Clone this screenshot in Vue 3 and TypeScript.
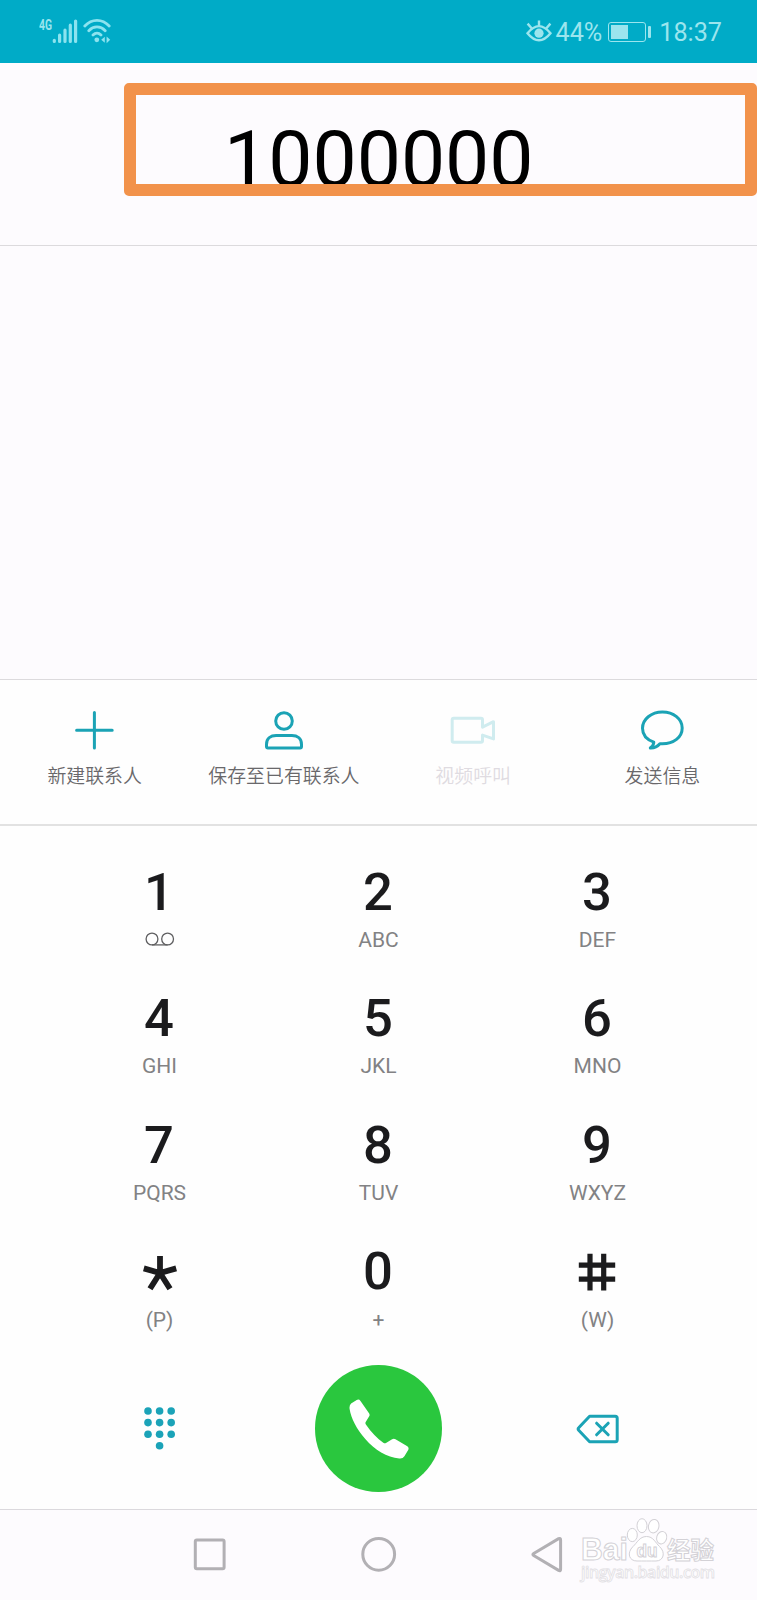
<script setup lang="ts">
interface DialKey {
  digit: string
  letters: string
  kind?: 'voicemail' | 'star' | 'hash'
}

const dialedNumber = '1000000'

const keys: DialKey[] = [
  { digit: '1', letters: '', kind: 'voicemail' },
  { digit: '2', letters: 'ABC' },
  { digit: '3', letters: 'DEF' },
  { digit: '4', letters: 'GHI' },
  { digit: '5', letters: 'JKL' },
  { digit: '6', letters: 'MNO' },
  { digit: '7', letters: 'PQRS' },
  { digit: '8', letters: 'TUV' },
  { digit: '9', letters: 'WXYZ' },
  { digit: '*', letters: '(P)', kind: 'star' },
  { digit: '0', letters: '+' },
  { digit: '#', letters: '(W)', kind: 'hash' },
]

const padDots = [
  [4, 4], [15.6, 4], [27.2, 4],
  [4, 15.6], [15.6, 15.6], [27.2, 15.6],
  [4, 27.2], [15.6, 27.2], [27.2, 27.2],
  [15.6, 38.8],
]
</script>

<template>
  <div class="phone">
    <header class="status">
      <div class="status-left">
        <span class="network">4G</span>
        <svg class="signal" width="26" height="26" viewBox="0 0 26 26">
          <path d="M2.3 22.3v1.2M7.6 17.2v6.3M13 12.2v11.3M18.3 7.2v16.3M23.6 3v20.5" />
        </svg>
        <svg class="wifi" width="28" height="26" viewBox="0 0 28 26">
          <path d="M1.8 8C8.8 .4 19.2 .4 26.2 8M5.8 12.7c4.8-5 11.6-5 16.4 0M10 17c2.4-2.4 5.6-2.4 8 0" />
          <circle cx="13.8" cy="21.8" r="2.4" />
          <path class="solid" d="M21.8 18.8v6l-3.6-3zM23.6 18.4v6.8l3.6-3.4z" />
        </svg>
      </div>
      <div class="status-right">
        <svg class="eye" width="26" height="24" viewBox="0 0 26 24">
          <path d="M1.500 13.200Q13 -1 24.500 13.200Q13 27.400 1.500 13.200ZM13 .6v5M1.600 3.600l3.800 4.400M24.400 3.600l-3.800 4.400" />
          <circle cx="13" cy="13.200" r="4.600" />
        </svg>
        <span class="percent">44%</span>
        <span class="battery"><span class="level"></span></span>
        <span class="nub"></span>
        <span class="time">18:37</span>
      </div>
    </header>

    <section class="display">
      <div class="number">{{ dialedNumber }}</div>
      <div class="highlight"></div>
    </section>

    <section class="results"></section>

    <section class="actions">
      <div class="action">
        <svg width="50" height="44" viewBox="0 0 50 44">
          <path d="M24.400 3.500v35.600M6.600 21.300h35.600" />
        </svg>
        <span>新建联系人</span>
      </div>
      <div class="action">
        <svg width="50" height="44" viewBox="0 0 50 44">
          <circle cx="25" cy="12" r="8.300" />
          <path d="M7.500 37.600v-2.200c0-6 4.400-8.800 9.600-8.800h15.800c5.200 0 9.600 2.800 9.600 8.800v2.200q0 1.400-1.400 1.400h-32.200q-1.400 0-1.400-1.400z" />
        </svg>
        <span>保存至已有联系人</span>
      </div>
      <div class="action disabled">
        <svg width="50" height="44" viewBox="0 0 50 44">
          <path d="M34.500 18.100V10.700q0-1.500-1.500-1.500H5.700q-1.500 0-1.500 1.500v21q0 1.500 1.500 1.500h27.300q1.500 0 1.500-1.500V26.100l11 3.800V12.700z" />
        </svg>
        <span>视频呼叫</span>
      </div>
      <div class="action">
        <svg width="50" height="44" viewBox="0 0 50 44">
          <path d="M16.800 33.200C9.800 30.700 5.500 25.600 5.500 19.300 5.500 10.300 14.200 3 25.400 3s19.800 7 19.800 16c0 9.400-8.600 15.800-19.800 15.800h-2.500c-2.100 2.500-5.200 4.400-9.600 4.200 2.400-2 3.500-3.900 3.500-5.800z" />
        </svg>
        <span>发送信息</span>
      </div>
    </section>

    <section class="dialer">
      <div class="keypad">
        <div v-for="key in keys" :key="key.digit" class="key" :class="key.kind">
          <svg v-if="key.kind === 'hash'" class="digit-icon" width="38" height="38" viewBox="0 0 38 38" role="img" aria-label="#">
            <path d="M12 .8v36.800M25.700 .8v36.800M.8 12.200h36.400M.8 26.200h36.400" />
          </svg>
          <svg v-else-if="key.kind === 'star'" class="digit-icon" width="36" height="36" viewBox="0 0 36 36" role="img" aria-label="*">
            <path d="M18 1v17M1.800 13.400 18 18M34.200 13.400 18 18M8 33.700 18 18M28 33.700 18 18" />
          </svg>
          <span v-else class="digit">{{ key.digit }}</span>
          <svg v-if="key.kind === 'voicemail'" class="tape" width="30" height="22" viewBox="0 0 30 22">
            <circle cx="7" cy="11" r="5.900" />
            <circle cx="22.600" cy="11" r="5.900" />
            <path d="M7 16.900h15.600" />
          </svg>
          <span v-else class="letters">{{ key.letters }}</span>
        </div>
      </div>

      <div class="controls">
        <div class="control">
          <svg class="dots" width="31.200" height="43" viewBox="0 0 31.200 43">
            <circle v-for="(dot, i) in padDots" :key="i" :cx="dot[0]" :cy="dot[1]" r="3.800" />
          </svg>
        </div>
        <div class="control">
          <div class="call">
            <svg width="60" height="60" viewBox="0 0 60 60">
              <path d="M2.100 4.600 7.700 1.100Q9.900-.2 11.500 2L20.200 14.600Q21 15.900 20.200 17.300L16.700 22.900Q16 24.100 16.900 25.400C22.500 33.500 28.200 39.300 34.300 43.700Q35.700 44.700 37 43.900L43.100 40.300Q44.800 39.400 46.500 40.300L58.300 47.300Q60.300 48.700 59.200 50.900L55.400 57.200Q53.800 59.800 50.300 59.400C38 58.600 25.700 50.600 16.300 39.900 7.700 30.100 2 19.500 .6 10Q.1 6.300 2.100 4.600Z" />
            </svg>
          </div>
        </div>
        <div class="control">
          <svg class="erase" width="44" height="32" viewBox="0 0 44 32">
            <path d="M13.600 3.300h25.600q2 0 2 2v21.400q0 2-2 2H13.600L2.700 17.200q-1.200-1.200 0-2.400zM20.600 10.200l11.600 11.600M32.200 10.200 20.600 21.800" />
          </svg>
        </div>
      </div>
    </section>

    <nav class="navbar">
      <svg width="40" height="40" viewBox="0 0 40 40"><rect x="5.300" y="5" width="28.800" height="28.800" rx="1.500" /></svg>
      <svg width="40" height="40" viewBox="0 0 40 40"><circle cx="19.700" cy="19.300" r="15.900" /></svg>
      <svg width="40" height="40" viewBox="0 0 40 40"><path d="M33.600 5v29.200q0 2.200-2 1.200L6.700 20.600q-1.600-1.100 0-2.200L31.600 3.700q2-.9 2 1.300z" /></svg>

      <svg class="watermark" width="150" height="76" viewBox="0 0 150 76">
        <g class="brand">
          <text x="5" y="42" font-size="31" textLength="47" lengthAdjust="spacingAndGlyphs">Bai</text>
          <ellipse cx="56.300" cy="17" rx="5" ry="6.600" />
          <ellipse cx="66" cy="7.700" rx="5" ry="7" />
          <ellipse cx="77.700" cy="8.200" rx="5.200" ry="6.800" transform="rotate(12 77.700 8.200)" />
          <ellipse cx="85.700" cy="19.700" rx="5" ry="6.300" transform="rotate(15 85.700 19.700)" />
          <path d="M70.500 18.500c7 0 9 6.500 13 10 6.500 6 4 14.500-3.500 14.500-5 0-14 0-19 0-8 0-10.500-8-4-14.500 4-3.500 6.500-10 13.500-10z" />
          <text class="du" x="60.500" y="38.500" font-size="18" textLength="21" lengthAdjust="spacingAndGlyphs">du</text>
          <text class="cjk" x="91" y="41" font-size="23.500" textLength="47">经验</text>
          <text class="url" x="5" y="60" font-size="16" textLength="134">jingyan.baidu.com</text>
        </g>
      </svg>
    </nav>
  </div>
</template>

<style>
html,
body {
  margin: 0;
  background: #fdfbfe;
}
</style>

<style scoped>
.phone {
  width: 757px;
  height: 1600px;
  display: flex;
  flex-direction: column;
  overflow: hidden;
  background: #fdfbfe;
  font-family: Roboto, "Liberation Sans", "Noto Sans CJK SC", sans-serif;
}

.phone * {
  box-sizing: border-box;
}

svg {
  display: block;
  flex: none;
}

.status {
  flex: none;
  height: 63px;
  padding: 0 35px 0 39px;
  display: flex;
  justify-content: space-between;
  background: #00abc7;
  color: #9be5ee;
}

.status-left {
  display: flex;
  align-items: flex-start;
  padding-top: 18px;
}

.network {
  width: 13px;
  font: 700 14px/14px Roboto, sans-serif;
  transform: scaleX(0.74);
  transform-origin: left;
}

.signal {
  stroke: #8ce3ef;
  stroke-width: 3.2;
  stroke-linecap: round;
}

.wifi {
  margin-left: 5px;
  fill: none;
  stroke: #8ce3ef;
  stroke-width: 2.8;
  stroke-linecap: round;
}

.wifi circle,
.wifi .solid {
  fill: #8ce3ef;
  stroke: none;
}

.status-right {
  display: flex;
  align-items: center;
  font-size: 25.2px;
  line-height: 30px;
  padding-top: 2px;
}

.eye {
  margin-right: 4px;
  margin-top: -2px;
  fill: none;
  stroke: #9be5ee;
  stroke-width: 2.4;
}

.eye circle {
  fill: #9be5ee;
  stroke: none;
}

.battery {
  width: 38px;
  height: 20px;
  margin-left: 6px;
  margin-top: -1px;
  padding: 2px;
  border: 1px solid #9be5ee;
  border-radius: 3px;
}

.level {
  display: block;
  width: 17px;
  height: 14px;
  background: #9be5ee;
}

.nub {
  width: 3px;
  height: 12px;
  margin: -1px 8px 0 2px;
  border-radius: 1px;
  background: #9be5ee;
}

.display {
  flex: none;
  position: relative;
  height: 183px;
  padding: 56px 0 0 224px;
  border-bottom: 1px solid #dcdadd;
}

.number {
  color: #000;
  font-size: 78.7px;
  line-height: 80px;
}

.highlight {
  position: absolute;
  left: 124px;
  top: 20px;
  width: 633px;
  height: 113px;
  border: 12px solid #f2924b;
  border-radius: 5px;
}

.results {
  flex: none;
  height: 433px;
}

.actions {
  flex: none;
  height: 147px;
  display: grid;
  grid-template-columns: repeat(4, 1fr);
  background: #fefefe;
  border-top: 1px solid #dcdadd;
  border-bottom: 2px solid #e2e2e2;
}

.action {
  display: flex;
  flex-direction: column;
  align-items: center;
  padding-top: 29px;
  color: #69686b;
  white-space: nowrap;
  font-family: "Noto Sans CJK SC", sans-serif;
  font-size: 18.9px;
  font-weight: 350;
  line-height: 28px;
}

.action svg {
  margin-bottom: 8px;
  fill: none;
  stroke: #1ba3b5;
  stroke-width: 3;
  stroke-linecap: round;
  stroke-linejoin: round;
}

.action.disabled {
  color: #dfdbe1;
}

.action.disabled svg {
  stroke: #d0ecef;
}

.dialer {
  flex: none;
  height: 683px;
  padding: 38px 50px 0;
  background: #fefefe;
}

.keypad {
  display: grid;
  grid-template-columns: repeat(3, 1fr);
  grid-auto-rows: 126.4px;
}

.key {
  display: flex;
  flex-direction: column;
  align-items: center;
}

.digit {
  height: 56px;
  padding-right: 1.2px;
  color: #1b1b1d;
  font-size: 52.6px;
  font-weight: 500;
  line-height: 56px;
}

.digit-icon {
  margin: 10px 1px 8px 0;
  fill: none;
  stroke: #1b1b1d;
  stroke-width: 5.2;
}

.star .digit-icon {
  margin: 11.5px 0 8.5px;
  stroke-width: 5.8;
}

.letters {
  margin-top: 8px;
  color: #828284;
  font-size: 21px;
  line-height: 24px;
}

.tape {
  margin: 8px 0 0;
  fill: none;
  stroke: #5f5f61;
  stroke-width: 1.3;
}

.key:nth-child(n + 10) .letters {
  margin-top: 9px;
}

.controls {
  display: grid;
  grid-template-columns: repeat(3, 1fr);
  height: 127px;
  margin-top: -4.4px;
}

.control {
  display: flex;
  align-items: center;
  justify-content: center;
}

.dots {
  fill: #1ba3b8;
}

.call {
  width: 126.6px;
  height: 126.6px;
  display: flex;
  align-items: center;
  justify-content: center;
  border-radius: 50%;
  background: #2ac73e;
}

.call svg {
  fill: #fff;
}

.erase {
  margin-top: 1px;
  fill: none;
  stroke: #1ba3b5;
  stroke-width: 3;
  stroke-linecap: round;
  stroke-linejoin: round;
}

.navbar {
  flex: none;
  position: relative;
  height: 91px;
  display: flex;
  align-items: center;
  justify-content: center;
  gap: 128.5px;
  border-top: 1px solid #dbd9dd;
}

.navbar > svg {
  fill: none;
  stroke: #b2b0b4;
  stroke-width: 3;
}

.navbar > .watermark {
  position: absolute;
  left: 576px;
  top: 8px;
}

.brand {
  fill: #fff;
  stroke: #d3d1d6;
  stroke-width: 1;
  font-family: "Liberation Sans", sans-serif;
  font-weight: 700;
}

.brand .cjk {
  font-family: "Noto Sans CJK SC", sans-serif;
}

.brand .url {
  font-family: "Open Sans", sans-serif;
  font-weight: 600;
  stroke: #e2e0e4;
  stroke-width: 0.8;
}
</style>
